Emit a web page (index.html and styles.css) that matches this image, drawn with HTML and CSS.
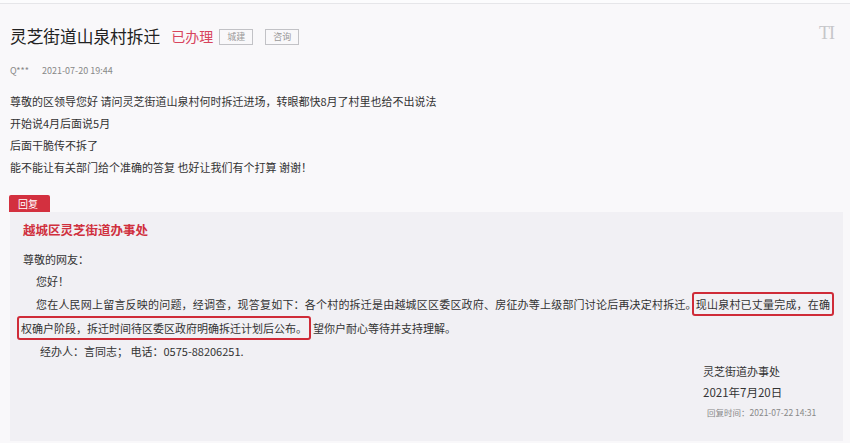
FILE: index.html
```html
<!DOCTYPE html>
<html lang="zh">
<head>
<meta charset="utf-8">
<link rel="stylesheet" href="styles.css">
</head>
<body>
<div class="topbar"></div>
<div class="page">
  <div class="title-row">
    <h1 class="title">灵芝街道山泉村拆迁</h1>
    <span class="status">已办理</span>
    <span class="tag tag-first">城建</span>
    <span class="tag">咨询</span>
    <span class="font-icon">TI</span>
  </div>
  <div class="meta"><span class="user">Q***</span><span class="date">2021-07-20 19:44</span></div>
  <div class="question">
    <p>尊敬的区领导您好 请问灵芝街道山泉村何时拆迁进场，转眼都快8月了村里也给不出说法</p>
    <p>开始说4月后面说5月</p>
    <p>后面干脆传不拆了</p>
    <p>能不能让有关部门给个准确的答复 也好让我们有个打算 谢谢！</p>
  </div>
  <div class="badge">回复</div>
  <div class="reply">
    <div class="reply-org">越城区灵芝街道办事处</div>
    <p class="salute">尊敬的网友：</p>
    <p class="hello">您好！</p>
    <p class="para-l1">您在人民网上留言反映的问题，经调查，现答复如下：各个村的拆迁是由越城区区委区政府、房征办等上级部门讨论后再决定村拆迁。<span class="mark">现山泉村已丈量完成，在确</span></p>
    <p class="para-l2"><span class="mark">权确户阶段，拆迁时间待区委区政府明确拆迁计划后公布。</span>望你户耐心等待并支持理解。</p>
    <p class="handler">经办人：言同志；&nbsp;电话：0575-88206251.</p>
    <div class="sign">
      <div class="sign-org">灵芝街道办事处</div>
      <div class="sign-date">2021年7月20日</div>
      <div class="sign-time">回复时间：2021-07-22 14:31</div>
    </div>
  </div>
</div>
</body>
</html>
```

FILE: styles.css
```css
html, body {
  margin: 0;
  padding: 0;
  background: #f9f8fa;
}
body {
  font-family: "Noto Sans CJK SC", "Noto Sans", sans-serif;
  color: #333;
  width: 850px;
  height: 443px;
  overflow: hidden;
}
p { margin: 0; }
.topbar {
  height: 3px;
  background: #fcfcfd;
  border-bottom: 1px solid #e6e6e9;
}
.page {
  padding: 0 7px 0 10px;
}
.title-row {
  display: flex;
  align-items: center;
  margin-top: 20px;
  height: 24px;
}
.title {
  margin: 0;
  font-size: 16.7px;
  font-weight: normal;
  color: #222;
  line-height: 24px;
}
.status {
  margin-left: 11px;
  font-size: 14px;
  color: #d8445c;
  line-height: 24px;
}
.tag {
  margin-left: 12px;
  box-sizing: border-box;
  width: 34px;
  height: 16px;
  border: 1px solid #c2c2c6;
  font-size: 9px;
  line-height: 14px;
  color: #999;
  text-align: center;
  margin-top: 1px;
}
.tag-first { margin-left: 6px; }
.font-icon {
  margin-left: auto;
  margin-right: 9px;
  font-family: "Liberation Serif", serif;
  font-size: 18px;
  color: #c6c6c9;
  letter-spacing: -1px;
  margin-top: -6px;
}
.meta {
  margin-top: 15px;
  line-height: 16px;
  font-size: 9px;
  color: #888;
}
.meta .date { margin-left: 13px; }
.question {
  margin-top: 11px;
  font-size: 11px;
  line-height: 22px;
  color: #333;
}
.badge {
  margin-top: 17px;
  width: 41px;
  height: 17px;
  box-sizing: border-box;
  padding-left: 9px;
  background: #d3303f;
  color: #fff;
  font-size: 10px;
  line-height: 17px;
  border-radius: 2px 2px 0 0;
  margin-left: -1px;
}
.reply {
  background: #f1f0f4;
  padding: 8px 12px 20px 13px;
  font-size: 11px;
  color: #333;
  display: flex;
  flex-direction: column;
}
.reply-org {
  font-size: 12.5px;
  font-weight: bold;
  color: #d0303e;
  line-height: 20px;
}
.salute {
  margin-top: 8px;
  line-height: 22px;
}
.hello {
  padding-left: 13px;
  line-height: 22px;
}
.para-l1 {
  line-height: 24px;
  text-indent: 13px;
  text-align: justify;
  text-align-last: justify;
}
.para-l2 {
  line-height: 24px;
}
.mark {
  border: 2px solid #cf2b38;
  border-radius: 3px;
  padding: 2px 2px;
  text-indent: 0;
}
.para-l1 .mark { margin: 0 -3px 0 -5px; }
.para-l2 .mark { margin: 0 2px 0 -6px; }
.handler {
  padding-left: 17px;
  line-height: 22px;
}
.sign {
  align-self: flex-start;
  margin-left: 680px;
  margin-top: -1px;
}
.sign-org { line-height: 20px; }
.sign-date { line-height: 22px; font-size: 11.5px; }
.sign-time {
  line-height: 18px;
  font-size: 8.5px;
  color: #888;
  padding-left: 4px;
}
```
